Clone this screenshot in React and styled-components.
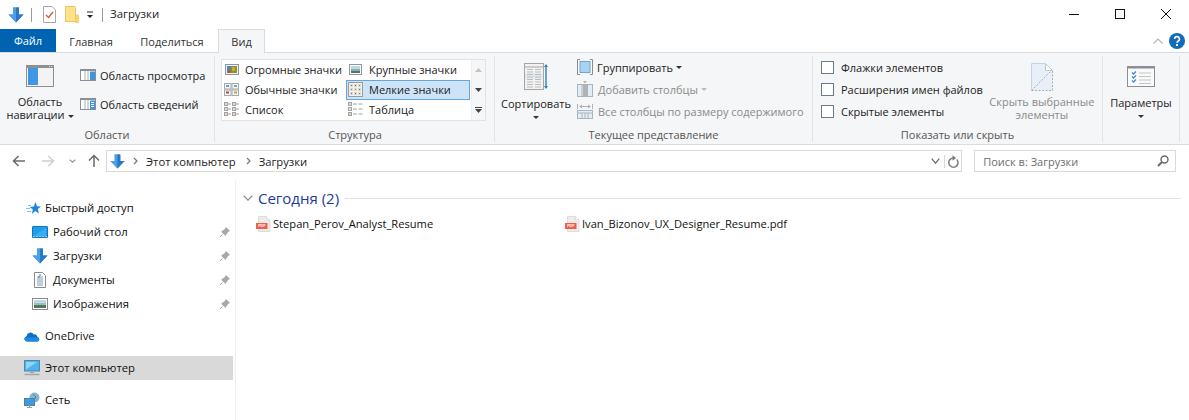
import React from 'react';
import styled, { createGlobalStyle } from 'styled-components';

const Global = createGlobalStyle`
  html, body { margin: 0; padding: 0; background: #fff; }
  body { font-family: "Open Sans", "Noto Sans", sans-serif; font-size: 11px; color: #1a1a1a; }
  * { box-sizing: border-box; }
`;

const Window = styled.div`width: 1189px; height: 420px; overflow: hidden; background: #fff; display: flex; flex-direction: column;`;
const Svg = styled.svg`flex: none; display: block;`;
const Spacer = styled.span`width: ${p => p.$w}px; flex: none;`;
const TitleBar = styled.div`height: 29px; display: flex; align-items: center; padding-left: 8px; flex: none;`;
const QuickSep = styled.span`width: 1px; height: 14px; background: #9a9a9a; flex: none; margin: ${p => p.$m || '0'};`;
const TitleText = styled.span`margin-left: 7px; padding-bottom: 2px; font-size: 11.4px; color: #222;`;
const WindowControls = styled.div`margin-left: auto; display: flex; align-self: stretch;`;
const WinBtn = styled.div`width: 46px; display: flex; align-items: center; justify-content: center; padding-bottom: 1px;`;
const TabRow = styled.div`height: 24px; flex: none; display: flex; border-bottom: 1px solid #dadbdc; position: relative;`;
const FileTab = styled.div`width: 56px; height: 23px; background: #0063b1; color: #fff; display: flex; align-items: center; justify-content: center;`;
const Tab = styled.div`height: 24px; width: ${p => p.$w}px; display: flex; align-items: center; justify-content: center; color: #333; margin-bottom: -1px;
  ${p => p.$active && `background:#f5f6f7; border:1px solid #dadbdc; border-bottom:none;`}`;
const TabRight = styled.div`margin-left: auto; display: flex; align-items: center; gap: 5px; padding-right: 4px;`;
const Ribbon = styled.div`height: 92px; flex: none; background: #f5f6f7; border-bottom: 1px solid #dadbdc; display: flex; padding: 3px 0 2px;`;
const Group = styled.div`width: ${p => p.$w}px; flex: none; border-right: 1px solid #e2e3e4; display: flex; flex-direction: column;`;
const GroupBody = styled.div`flex: 1; display: flex; min-height: 0; padding: ${p => p.$p || '0'};`;
const GroupLabel = styled.div`height: 17px; flex: none; text-align: center; line-height: 19px; color: #555; padding-left: ${p => p.$pl || 0}px;`;
const BigButton = styled.div`width: ${p => p.$w}px; flex: none; margin-left: ${p => p.$ml || 0}px; display: flex; flex-direction: column; align-items: center; text-align: center; line-height: 13px; color: ${p => p.$dim ? '#8a8a8a' : '#222'}; padding-top: ${p => p.$top || 0}px; white-space: nowrap;`;
const BigLabel = styled.div`margin-top: ${p => p.$m ?? 8}px;`;
const Caret = styled.span`display: inline-block; width: 0; height: 0; border: 3px solid transparent; border-top: 3px solid ${p => p.$c || '#333'}; border-bottom: none; margin: ${p => p.$m || '0 0 0 3px'}; vertical-align: middle;`;
const SmallStack = styled.div`display: flex; flex-direction: column; gap: ${p => p.$gap || 0}px; padding-top: ${p => p.$top || 0}px; padding-left: ${p => p.$left || 0}px;`;
const SmallAction = styled.div`height: ${p => p.$h || 22}px; display: flex; align-items: center; gap: 4px; white-space: nowrap; color: ${p => p.$dim ? '#8a8a8a' : '#222'};`;
const Gallery = styled.div`margin: 3px 0 0 6px; width: 265px; height: 62px; background: #fff; border: 1px solid #e1e2e3; display: flex;`;
const GalleryGrid = styled.div`display: grid; grid-template-columns: 124px 124px; grid-auto-rows: 20px;`;
const GalleryCell = styled.div`display: flex; align-items: center; gap: 6px; padding: 0 0 2px 2px; white-space: nowrap; color: #222;
  ${p => p.$sel && `background:#cde4f8; border:1px solid #64a5dc; padding:0 0 2px 1px;`}`;
const CellIcon = styled.span`width: 15px; flex: none; display: flex; justify-content: center;`;
const Scroller = styled.div`width: 14px; margin-left: 1px; background: #f5f6f7; border-left: 1px solid #eee; display: flex; flex-direction: column; align-items: center;`;
const ScrollCell = styled.div`height: 20px; display: flex; align-items: center; justify-content: center;`;
const CheckRow = styled.div`height: 22px; display: flex; align-items: center; gap: 7px; white-space: nowrap; color: #222;`;
const Box = styled.span`width: 13px; height: 13px; background: #fff; border: 1px solid #6d7a8c; flex: none;`;
const AddressRow = styled.div`height: 33px; flex: none; display: flex; align-items: center; padding: 0 13px 1px 0;`;
const NavBtn = styled.div`width: ${p => p.$w}px; flex: none; display: flex; align-items: center; justify-content: center;`;
const AddressBox = styled.div`width: 857px; height: 22px; margin-left: 4px; border: 1px solid #d9d9d9; display: flex; align-items: center; padding-left: 3px; color: #222; font-size: 11.25px;`;
const Crumb = styled.span`margin-left: ${p => p.$m}px; white-space: nowrap;`;
const AddressTail = styled.div`margin-left: auto; display: flex; align-items: center; align-self: stretch;`;
const TailBtn = styled.div`width: ${p => p.$w}px; display: flex; align-items: center; justify-content: center; ${p => p.$sep && 'border-left:1px solid #d9d9d9;'}`;
const SearchBox = styled.div`width: 202px; height: 22px; margin-left: 12px; border: 1px solid #d9d9d9; display: flex; align-items: center; justify-content: space-between; padding: 0 6px 0 8px; color: #6d6d6d;`;
const Main = styled.div`flex: 1; display: flex; min-height: 0;`;
const Sidebar = styled.div`width: 233px; flex: none; padding-top: 18px; display: flex; flex-direction: column;`;
const NavItem = styled.div`height: 24px; flex: none; display: flex; align-items: center; padding: 0 0 2px ${p => p.$pl}px; margin-top: ${p => p.$mt || 0}px; color: #111; position: relative; white-space: nowrap; font-size: 11.3px;
  ${p => p.$sel && 'background:#d9d9d9;'}`;
const NavIcon = styled.span`width: ${p => p.$w || 16}px; height: 16px; flex: none; margin: 2px ${p => p.$mr || 5}px 0 0; display: flex; align-items: center; justify-content: center;`;
const Pin = styled.span`position: absolute; left: 219px; top: 6px; display: flex;`;
const Content = styled.div`flex: 1; margin: 2px 0 0 2px; border-left: 1px solid #f0f0f0; padding: 9px 8px 0 7px;`;
const GroupHeader = styled.div`height: 20px; display: flex; align-items: center; color: #1c3a9e; font-size: 15px; padding-bottom: 2px;`;
const HeaderLine = styled.span`flex: 1; height: 1px; background: #e2e2e2; margin-left: 6px;`;
const FileGrid = styled.div`margin: 5px 0 0 13px; display: grid; grid-template-columns: 309px 309px;`;
const FileItem = styled.div`height: 20px; display: flex; align-items: center; gap: 2px; color: #111; white-space: nowrap; padding-bottom: 2px; font-size: 11.15px;`;
const FileIcon = styled.span`display: flex; margin-top: 2px;`;
const PdfLabel = styled.text`font-family: "Liberation Sans", sans-serif; font-size: 3.6px; font-weight: 700; fill: #fff;`;

const S = ({ w = 16, h = 16, children, vb }) => (
  <Svg width={w} height={h} viewBox={vb || `0 0 ${w} ${h}`} fill="none">{children}</Svg>
);

const DownArrow = ({ s = 16 }) => (
  <S w={s} h={s} vb="0 0 16 16"><path d="M5 .5h6v7h4.5L8 15.5.5 7.5H5z" fill="#3b8fe0" /><path d="M5 .5h3v15L.5 7.5H5z" fill="#4a9fea" /><path d="M8 15.5l7.5-8H11v-7H8z" fill="#2a77c6" /></S>
);
const NoteIcon = () => (
  <S w={13} h={17}><path d="M.5.5h8.5l3.5 3.5v12.5H.5z" fill="#fff" stroke="#a8a8a8" /><path d="M3 9l2.5 2.5L10 6" stroke="#e4572e" strokeWidth="1.4" /></S>
);
const FolderQuick = () => (
  <S w={14} h={17}><path d="M.5.5h9.5l.5 1v14H.5z" fill="#ffe28a" stroke="#e8c565" /><path d="M10.5 9h3v7.5h-3z" fill="#ffd467" stroke="#e8c565" strokeWidth=".7" /></S>
);
const QuickDrop = () => (
  <S w={8} h={8}><path d="M1 1h6" stroke="#222" /><path d="M1 4h6L4 7z" fill="#222" /></S>
);
const PaneIcon = ({ variant }) => (
  <S w={16} h={12}>
    <rect x=".5" y=".5" width="15" height="11" fill="#fff" stroke="#8a8f95" />
    <path d="M1 1h14v1H1z" fill="#8a8f95" />
    <path d="M5 2v9M8 2v9" stroke="#a9adb2" />
    <rect x="10" y="2.5" width="5" height="8.5" fill="#3e95e4" />
    {variant === 'details' && <path d="M11 4.5h3M11 6.5h3M11 8.5h3" stroke="#e9f3fc" />}
  </S>
);
const NavPaneIcon = () => (
  <S w={28} h={22}>
    <rect x=".5" y=".5" width="27" height="21" fill="#f3f3f3" stroke="#8f8f8f" />
    <rect x="1" y="1" width="26" height="2" fill="#8f8f8f" />
    <rect x="2" y="3" width="10" height="17" fill="#3f97e3" />
    <path d="M23 1.5h3" stroke="#ddd" strokeDasharray="1 1" />
  </S>
);
const HugeIcon = () => (
  <S w={14} h={11}><rect x=".5" y=".5" width="13" height="10" fill="#eef1f4" stroke="#8e96a0" /><rect x="2" y="2" width="10" height="7" fill="#4f86c0" /><rect x="6" y="2" width="6" height="7" fill="#7f9a35" /><rect x="7" y="3" width="3" height="4" fill="#e0a02e" /><rect x="3" y="6" width="3" height="3" fill="#c8503a" /></S>
);
const LargeIcon = () => (
  <S w={13} h={11}><rect x=".5" y=".5" width="12" height="10" fill="#fff" stroke="#8e96a0" /><rect x="2" y="2" width="9" height="3" fill="#bcd8ec" /><rect x="2" y="5" width="9" height="2" fill="#8fb0a4" /><rect x="2" y="7" width="9" height="2" fill="#4e7a64" /></S>
);
const MediumIcon = () => (
  <S w={15} h={13}><rect x=".5" y=".5" width="6.5" height="5.5" fill="#f3f5f7" stroke="#a5a9ae" /><rect x="8" y=".5" width="6.5" height="5.5" fill="#f3f5f7" stroke="#a5a9ae" /><rect x=".5" y="7" width="6.5" height="5.5" fill="#f3f5f7" stroke="#a5a9ae" /><rect x="8" y="7" width="6.5" height="5.5" fill="#f3f5f7" stroke="#a5a9ae" /><rect x="2" y="2" width="3" height="2" fill="#6fa0cf" /><rect x="10" y="2" width="3" height="2" fill="#7fa89a" /><rect x="2" y="8.5" width="3" height="2" fill="#c8402a" /><rect x="10" y="8.5" width="3" height="2" fill="#c9a227" /></S>
);
const ListIcon = () => (
  <S w={15} h={14}>{[0, 8].map(x => [0, 5, 10].map((y, i) => (
    <g key={x + '-' + y}>
      <rect x={x + .5} y={y + .5} width="3" height="3" fill="#fff" stroke="#a2a2a2" />
      <rect x={x + 1.5} y={y + 1.5} width="1" height="1" fill={['#4a7fb5', '#7a9a55', '#c0453a'][i]} />
      <path d={`M${x + 4} ${y + 2}h3`} stroke="#a2a2a2" />
    </g>
  )))}</S>
);
const SmallGridIcon = () => (
  <S w={15} h={15}><rect x=".5" y=".5" width="14" height="14" fill="#eef2f5" stroke="#9a9a9a" />{[2, 6, 10].map((x, a) => [2, 6, 10].map((y, b) => (
    <g key={x + '-' + y}>
      <rect x={x} y={y} width="3" height="3" fill="#dfd9c8" />
      <rect x={x + 1} y={y + 1} width="1" height="1" fill={['#4a7fb5', '#c0453a', '#7a9a55', '#d0a030'][(a + b * 2) % 4]} />
    </g>
  )))}</S>
);
const TableIcon = () => (
  <S w={15} h={14}>{[0, 5, 10].map((y, i) => (
    <g key={y}>
      <rect x=".5" y={y + .5} width="3" height="3" fill="#fff" stroke="#a2a2a2" />
      <rect x="1.5" y={y + 1.5} width="1" height="1" fill={['#4a7fb5', '#7a9a55', '#c0453a'][i]} />
      <path d={`M5 ${y + 2}h4M10.5 ${y + 2}h4`} stroke="#a2a2a2" />
    </g>
  ))}</S>
);
const SortIcon = () => (
  <S w={24} h={28}><rect x=".5" y=".5" width="19" height="26" fill="#f2f2f2" stroke="#a5a5a5" /><path d="M.5 4h19" stroke="#a5a5a5" /><rect x="1" y="10" width="18" height="6" fill="#e1e9f1" />{[6.5, 9, 11.5, 14, 16.5, 19, 21.5, 24].map(y => <path key={y} d={`M3 ${y}h6M11 ${y}h6`} stroke="#bdbdbd" />)}<path d="M22 2v23" stroke="#2d7fc8" strokeWidth="1.4" /><path d="M20 4l2-3 2 3zM20 23l2 3 2-3z" fill="#2d7fc8" /></S>
);
const GroupIcon = () => (
  <S w={16} h={16}><path d="M3 .5H.5v15H3M13 .5h2.5v15H13" stroke="#8b8b8b" /><rect x="3" y="2.5" width="10" height="11" fill="#a9d2f2" stroke="#6da7d6" /></S>
);
const ColumnsIcon = () => (
  <S w={17} h={16}><rect x=".5" y="3.5" width="15" height="12" fill="#e1ecf5" stroke="#a9b4bd" /><path d="M5 3.5v12M10.5 3.5v12" stroke="#a9b4bd" /><rect x="6" y="4" width="4" height="11" fill="#b3b3b3" /><path d="M6 0h4L8 2.5z" fill="#b3b3b3" /></S>
);
const FitIcon = () => (
  <S w={17} h={16}><path d="M.5 1v5M15.5 1v5M3 3.5h10" stroke="#a9b4bd" /><path d="M2 3.5l3-2v4zM14 3.5l-3-2v4z" fill="#a9b4bd" /><rect x=".5" y="7.5" width="15" height="8" fill="#e6eef5" stroke="#a9b4bd" /><path d="M.5 10h15M5 10v5.5M8 10v5.5M11 10v5.5" stroke="#a9b4bd" /></S>
);
const HideIcon = () => (
  <S w={22} h={28}><path d="M.5.5h14l7 7v20H.5z" fill="#e8eff9" /><path d="M.5 27.5L21 7M.5 27.5h21v-20" stroke="#aab0b8" strokeDasharray="2 1.5" /><path d="M14.5.5v7h7z" fill="#fff" stroke="#c3c8ce" /><path d="M.5 27V.5h14" stroke="#c4d3e6" /></S>
);
const OptionsIcon = () => (
  <S w={28} h={21}><rect x=".5" y=".5" width="27" height="20" fill="#fafafa" stroke="#8a8f95" /><path d="M1 1.5h26" stroke="#8a8f95" strokeWidth="2" /><path d="M12 7h12M12 10.5h12M12 14h12M12 17.5h12" stroke="#c0c4c8" /><g stroke="#3a8bd8" strokeWidth="1.3"><path d="M5 6.5l1.5 1.5 2.5-2.5M5 10.5l1.5 1.5 2.5-2.5M5 14.5l1.5 1.5 2.5-2.5" /></g></S>
);
const BackArrow = ({ c, flip }) => (
  <S w={14} h={12}><g transform={flip ? 'translate(14,0) scale(-1,1)' : undefined}><path d="M1.5 6h11.5M6.5 1L1.5 6l5 5" stroke={c} strokeWidth="1.5" /></g></S>
);
const UpArrow = () => <S w={12} h={14}><path d="M6 13V1.5M1 6.5l5-5 5 5" stroke="#6b6b6b" strokeWidth="1.5" /></S>;
const Chev = ({ c = '#888', w = 8, h = 5 }) => <S w={w} h={h}><path d={`M.7.7L${w / 2} ${h - .8}L${w - .7} .7`} stroke={c} strokeWidth="1.2" /></S>;
const CrumbArrow = () => <S w={5} h={8}><path d="M1 1l3 3-3 3" stroke="#777" strokeWidth="1.2" /></S>;
const Refresh = () => <S w={12} h={13}><path d="M9.8 4.5A4.6 4.6 0 1 1 6 3" stroke="#7c7c7c" strokeWidth="1.5" /><path d="M5.5 .3v5.4L9 3z" fill="#7c7c7c" /></S>;
const SearchIcon = () => <S w={12} h={12}><circle cx="7.5" cy="4.5" r="3.5" stroke="#6b6b6b" strokeWidth="1.4" /><path d="M5 7L1 11" stroke="#6b6b6b" strokeWidth="2" /></S>;
const PinIcon = () => <S w={12} h={12}><path d="M7 1l4 4-1.5.8-2.5 3L6.5 10 2 5.5l1.2-.5 3-2.5z" fill="#a4a9ad" /><path d="M3.5 8.5L.8 11.2" stroke="#a4a9ad" /></S>;
const StarIcon = () => <S w={15} h={13}><path d="M9.5 0l1.5 4.2 4 .2-3.2 2.6 1.2 4.5-3.6-2.4L5.8 12l1.1-4.6L3.6 5l4.2-.6z" fill="#1e86dc" /><path d="M2 3.5h3M0 6.5h4M1 9.5h4" stroke="#7fbdee" /></S>;
const DesktopIcon = () => <S w={16} h={12}><rect x=".5" y=".5" width="15" height="11" rx=".5" fill="#1e9eea" stroke="#0f77c2" /><path d="M2 10L14 2v8z" fill="#3aaef0" /><path d="M1.5 10.5h13" stroke="#fff" strokeDasharray="1 2" /></S>;
const DocIcon = () => <S w={12} h={16}><path d="M.5.5h8l3 3v12H.5z" fill="#fff" stroke="#8a8a8a" /><path d="M3 5h6M3 7h6M3 9h6M3 11h6M3 13h6" stroke="#7f9db8" /><path d="M5 3h2M4 5h2" stroke="#2d7fc8" /></S>;
const PictureIcon = () => <S w={16} h={12}><rect x=".5" y=".5" width="15" height="11" fill="#fff" stroke="#8a8a8a" /><rect x="2" y="2" width="12" height="3" fill="#bcd8ec" /><rect x="2" y="5" width="12" height="2" fill="#9cc0b4" /><rect x="2" y="7" width="12" height="3" fill="#4f7a5e" /></S>;
const CloudIcon = () => <S w={16} h={11}><path d="M3 10.5A2.7 2.7 0 0 1 2.5 5.2 4 4 0 0 1 9.8 3.4 3.2 3.2 0 0 1 13.5 6 2.3 2.3 0 0 1 13.5 10.5z" fill="#0f6cc0" /><path d="M3 10.5a2.7 2.7 0 0 1-2-4.3h12.8a2.3 2.3 0 0 1-.3 4.3z" fill="#1b8ae0" /></S>;
const PcIcon = () => <S w={16} h={16}><rect x=".5" y=".5" width="15" height="10.5" fill="#4db4f0" stroke="#4e87a8" /><path d="M2 9.5L13 2H2z" fill="#90d4f8" /><path d="M6 12.5h4" stroke="#9aa7b0" /><path d="M.5 14.5h15" stroke="#9aa7b0" strokeWidth="1.4" /></S>;
const NetIcon = () => <S w={16} h={16}><circle cx="10.5" cy="5.5" r="5" fill="#7fb5d8" /><path d="M9 2l3 3-2 3" stroke="#4f8f6a" /><rect x=".5" y="6.5" width="10" height="7" fill="#3b9be4" stroke="#5b7c95" /><path d="M5.5 13.5v2M3 15.5h5" stroke="#8fa0ac" /></S>;
const PdfIcon = () => <S w={15} h={16}><path d="M2.5.5h8l3.5 3.5v11.5H2.5z" fill="#ececec" stroke="#dcdcdc" /><path d="M10.5.5V4H14" fill="#f8f8f8" stroke="#dcdcdc" /><rect x="0" y="7" width="11.5" height="6" fill="#ef5f4a" /><PdfLabel x="2.2" y="11.4">PDF</PdfLabel></S>;
const Help = () => <S w={16} h={16}><circle cx="8" cy="8" r="8" fill="#0f6cbd" /><path d="M5.6 6A2.4 2.4 0 1 1 9 8.2c-.7.4-1 .8-1 1.6" stroke="#fff" strokeWidth="1.6" /><rect x="7" y="11" width="2" height="2" fill="#fff" /></S>;

export default function App() {
  return (
    <Window>
      <Global />
      <TitleBar>
        <DownArrow />
        <QuickSep $m="0 0 0 7px" />
        <Spacer $w={11} />
        <NoteIcon />
        <Spacer $w={9} />
        <FolderQuick />
        <Spacer $w={7} />
        <QuickDrop />
        <QuickSep $m="0 0 0 8px" />
        <TitleText>Загрузки</TitleText>
        <WindowControls>
          <WinBtn><S w={10} h={10}><path d="M0 5.5h10" stroke="#111" /></S></WinBtn>
          <WinBtn><S w={10} h={10}><rect x=".5" y=".5" width="9" height="9" stroke="#111" /></S></WinBtn>
          <WinBtn><S w={10} h={10}><path d="M0 0l10 10M10 0L0 10" stroke="#111" /></S></WinBtn>
        </WindowControls>
      </TitleBar>
      <TabRow>
        <FileTab>Файл</FileTab>
        <Tab $w={70}>Главная</Tab>
        <Tab $w={92}>Поделиться</Tab>
        <Tab $w={47} $active>Вид</Tab>
        <TabRight>
          <S w={12} h={8}><path d="M1.5 6.5L6 2l4.5 4.5" stroke="#b5b5b5" strokeWidth="1.2" /></S>
          <Help />
        </TabRight>
      </TabRow>
      <Ribbon>
        <Group $w={215}>
          <GroupBody>
            <BigButton $w={80} $top={9}>
              <NavPaneIcon />
              <BigLabel $m={8}>Область<br />навигации<Caret /></BigLabel>
            </BigButton>
            <SmallStack $top={8} $gap={7}>
              <SmallAction><PaneIcon />Область просмотра</SmallAction>
              <SmallAction><PaneIcon variant="details" />Область сведений</SmallAction>
            </SmallStack>
          </GroupBody>
          <GroupLabel>Области</GroupLabel>
        </Group>
        <Group $w={280}>
          <GroupBody>
            <Gallery>
              <GalleryGrid>
                <GalleryCell><CellIcon><HugeIcon /></CellIcon>Огромные значки</GalleryCell>
                <GalleryCell><CellIcon><LargeIcon /></CellIcon>Крупные значки</GalleryCell>
                <GalleryCell><CellIcon><MediumIcon /></CellIcon>Обычные значки</GalleryCell>
                <GalleryCell $sel><CellIcon><SmallGridIcon /></CellIcon>Мелкие значки</GalleryCell>
                <GalleryCell><CellIcon><ListIcon /></CellIcon>Список</GalleryCell>
                <GalleryCell><CellIcon><TableIcon /></CellIcon>Таблица</GalleryCell>
              </GalleryGrid>
              <Scroller>
                <ScrollCell><S w={7} h={4}><path d="M0 4l3.5-4L7 4z" fill="#c4c4c4" /></S></ScrollCell>
                <ScrollCell><S w={7} h={4}><path d="M0 0l3.5 4L7 0z" fill="#444" /></S></ScrollCell>
                <ScrollCell><S w={7} h={6}><path d="M0 .5h7" stroke="#444" /><path d="M0 2l3.5 4L7 2z" fill="#444" /></S></ScrollCell>
              </Scroller>
            </Gallery>
          </GroupBody>
          <GroupLabel $pl={1}>Структура</GroupLabel>
        </Group>
        <Group $w={318}>
          <GroupBody>
            <BigButton $w={82} $top={7}>
              <SortIcon />
              <BigLabel $m={6}>Сортировать</BigLabel>
              <Caret $m="6px 0 0 0" />
            </BigButton>
            <SmallStack>
              <SmallAction><GroupIcon />Группировать<Caret $m="0 0 0 -1px" /></SmallAction>
              <SmallAction $dim><ColumnsIcon />Добавить столбцы<Caret $c="#bbb" $m="0 0 0 -1px" /></SmallAction>
              <SmallAction $dim><FitIcon />Все столбцы по размеру содержимого</SmallAction>
            </SmallStack>
          </GroupBody>
          <GroupLabel>Текущее представление</GroupLabel>
        </Group>
        <Group $w={290}>
          <GroupBody>
            <SmallStack $left={8}>
              <CheckRow><Box />Флажки элементов</CheckRow>
              <CheckRow><Box />Расширения имен файлов</CheckRow>
              <CheckRow><Box />Скрытые элементы</CheckRow>
            </SmallStack>
            <BigButton $w={114} $top={7} $dim $ml={2}>
              <HideIcon />
              <BigLabel $m={4}>Скрыть выбранные<br />элементы</BigLabel>
            </BigButton>
          </GroupBody>
          <GroupLabel>Показать или скрыть</GroupLabel>
        </Group>
        <Group $w={77}>
          <GroupBody>
            <BigButton $w={76} $top={10}>
              <OptionsIcon />
              <BigLabel $m={9}>Параметры</BigLabel>
              <Caret $m="6px 0 0 0" />
            </BigButton>
          </GroupBody>
        </Group>
      </Ribbon>
      <AddressRow>
        <NavBtn $w={38}><BackArrow c="#6b6b6b" /></NavBtn>
        <NavBtn $w={20}><BackArrow c="#cfcfcf" flip /></NavBtn>
        <NavBtn $w={28}><Chev c="#999" w={7} h={4} /></NavBtn>
        <NavBtn $w={16}><UpArrow /></NavBtn>
        <AddressBox>
          <DownArrow s={15} />
          <Spacer $w={8} /><CrumbArrow />
          <Crumb $m={8}>Этот компьютер</Crumb>
          <Spacer $w={10} /><CrumbArrow />
          <Crumb $m={8}>Загрузки</Crumb>
          <AddressTail>
            <TailBtn $w={17}><Chev c="#666" w={9} h={6} /></TailBtn>
            <TailBtn $w={17} $sep><Refresh /></TailBtn>
          </AddressTail>
        </AddressBox>
        <SearchBox>Поиск в: Загрузки<SearchIcon /></SearchBox>
      </AddressRow>
      <Main>
        <Sidebar>
          <NavItem $pl={25}><NavIcon $mr={4}><StarIcon /></NavIcon>Быстрый доступ</NavItem>
          <NavItem $pl={32}><NavIcon><DesktopIcon /></NavIcon>Рабочий стол<Pin><PinIcon /></Pin></NavItem>
          <NavItem $pl={32}><NavIcon><DownArrow /></NavIcon>Загрузки<Pin><PinIcon /></Pin></NavItem>
          <NavItem $pl={32}><NavIcon><DocIcon /></NavIcon>Документы<Pin><PinIcon /></Pin></NavItem>
          <NavItem $pl={32}><NavIcon><PictureIcon /></NavIcon>Изображения<Pin><PinIcon /></Pin></NavItem>
          <NavItem $pl={24} $mt={8}><NavIcon><CloudIcon /></NavIcon>OneDrive</NavItem>
          <NavItem $pl={24} $mt={8} $sel><NavIcon><PcIcon /></NavIcon>Этот компьютер</NavItem>
          <NavItem $pl={24} $mt={8}><NavIcon><NetIcon /></NavIcon>Сеть</NavItem>
        </Sidebar>
        <Content>
          <GroupHeader>
            <Chev c="#8a8a8a" w={10} h={6} />
            <Spacer $w={5} />
            Сегодня (2)
            <HeaderLine />
          </GroupHeader>
          <FileGrid>
            <FileItem><FileIcon><PdfIcon /></FileIcon>Stepan_Perov_Analyst_Resume</FileItem>
            <FileItem><FileIcon><PdfIcon /></FileIcon>Ivan_Bizonov_UX_Designer_Resume.pdf</FileItem>
          </FileGrid>
        </Content>
      </Main>
    </Window>
  );
}
